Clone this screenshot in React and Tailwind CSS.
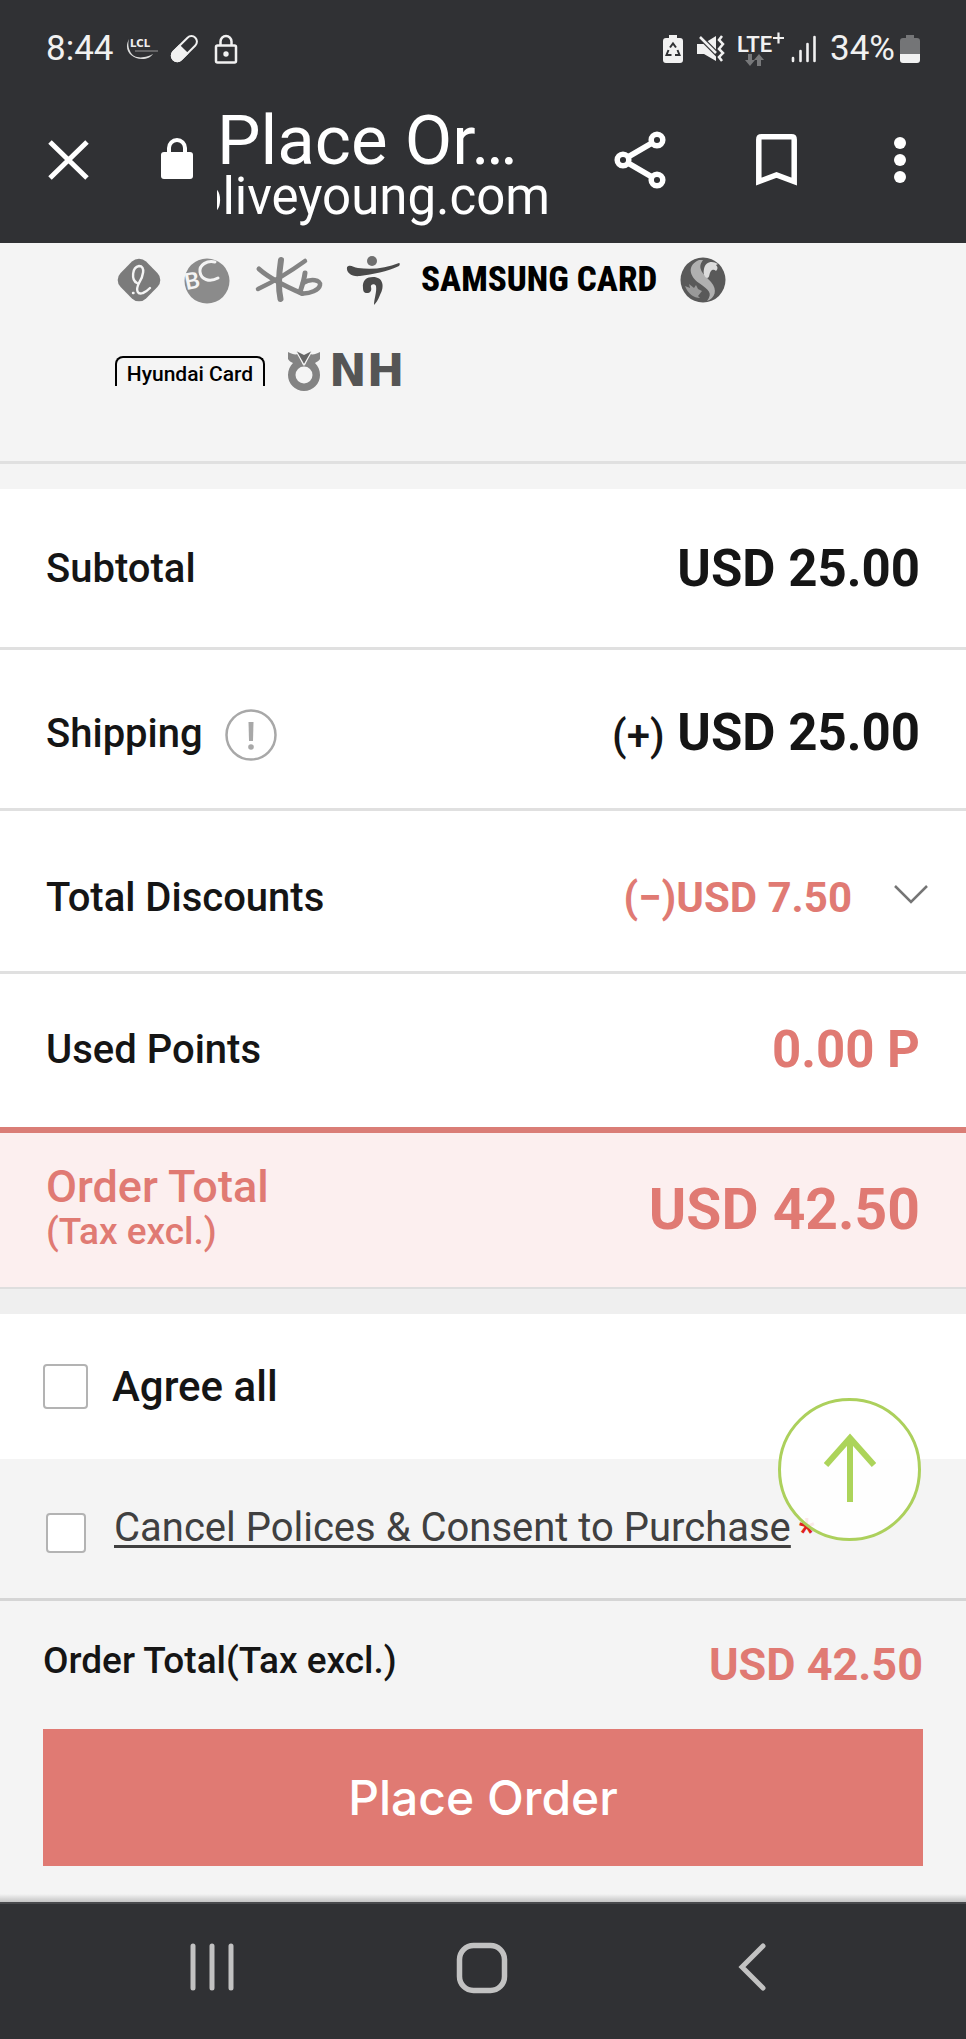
import { useState } from 'react'

const cardBrands = {
  lotte: (
    <svg className="h-12 w-12" viewBox="0 0 48 48" role="img" aria-label="Lotte Card">
      <rect x="6" y="6" width="36" height="36" rx="10" fill="#7b7b7b" transform="rotate(45 24 24)" />
      <path d="M18 37h.5M22 27C16 24 17 11 24 10C31 10 28 21 24 27C20 35 23 39 28 37C31 36 33 34 35 32" fill="none" stroke="#f4f4f4" strokeWidth="2.400" strokeLinecap="round" />
    </svg>
  ),
  bc: (
    <svg className="h-12 w-12" viewBox="0 0 48 48" role="img" aria-label="BC Card">
      <circle cx="24" cy="25" r="22.500" fill="#8b8b8b" />
      <text x="2" y="33" transform="rotate(-12 8 28)" fontFamily="Lato, sans-serif" fontSize="23" fontWeight="700" fill="#f4f4f4">B</text>
      <path d="M32 6c-8-2-16 3-15 10s9 11 18 6" fill="none" stroke="#f4f4f4" strokeWidth="3" strokeLinecap="round" />
    </svg>
  ),
  kb: (
    <svg className="h-12 w-[68px]" viewBox="0 0 68 48" role="img" aria-label="KB Card" fill="none" stroke="#838383" strokeLinecap="round">
      <path d="M26 4C24 17 23 32 25.500 43" strokeWidth="6" />
      <path d="M4 13C14 22 32 31 47 37.500" strokeWidth="5" />
      <path d="M50 5C32 18 18 26 3 33" strokeWidth="4.500" />
      <path d="M50 17C49 25 47 30 45 36" strokeWidth="5" />
      <path d="M48 27c8-5 18-3 17 2s-10 9-18 8.500" strokeWidth="4.500" />
    </svg>
  ),
  hana: (
    <svg className="h-[50px] w-[54px]" viewBox="0 0 54 50" role="img" aria-label="Hana Card">
      <circle cx="26" cy="6" r="5" fill="#6f6f6f" />
      <path d="M1 12c3-3 6 0 11 1 15 2 28 0 41-5 1 0 1 2 0 3C41 17 27 19 14 21 6 22 0 18 1 12Z" fill="#4a4a4a" />
      <path d="M17 33c-1-8 4-11 10-11 10 0 12 9 7 18-2 5-4 8-6 10 0-6 3-13 2-19-1-3-6-2-5 1 1 4-1 6-4 6s-4-2-4-5Z" fill="#4a4a4a" />
    </svg>
  ),
  shinhan: (
    <svg className="h-12 w-12" viewBox="0 0 48 48" role="img" aria-label="Shinhan Card">
      <circle cx="24" cy="24" r="22.500" fill="#595959" />
      <path d="M20 4C8 9 10 20 20 27s14 10 8 18c8-3 11-11 4-19S17 13 24 4Z" fill="#b0b0b0" />
      <path d="M25 13c1-7 8-9 14-5l-2 1c2 2 2 4 0 6-2-2-4-1-5 0-2 2-1 7-4 7-3-1-4-5-3-9Z" fill="#dcdcdc" />
      <path d="M6 30l5 2-1-4 5 4 2-3 2 4 4 2-4 5 2 2c-6 0-12-4-15-12Z" fill="#999" />
    </svg>
  ),
  nh: (
    <svg className="h-[42px] w-[34px]" viewBox="0 0 34 42" role="img" aria-label="NH emblem">
      <path d="M1 2c4 2 7 3 10 2l5 11h2l5-11c3 1 6 0 10-2v7c-2 3-4 3-5 4 3 3 5 7 5 12a16 16 0 0 1-32 0c0-5 2-9 5-12-2-1-4-2-5-4Z" fill="#838383" />
      <path d="M9 1l8 4 8-4-8 14Z" fill="#666" />
      <path d="M9 1l8 14 8-14" fill="none" stroke="#f4f4f4" strokeWidth="1.200" />
      <circle cx="17" cy="25" r="8.500" fill="#f4f4f4" />
    </svg>
  ),
}

function StatusBar() {
  return (
    <div className="flex h-24 items-center justify-between px-[46px] pt-[2px] text-[35px] leading-10 text-[#f1f1f1]">
      <div className="flex items-center gap-3">
        <span>8:44</span>
        <svg className="h-6 w-8" viewBox="0 0 32 24" role="img" aria-label="LCL">
          <path d="M3 2c-6 11 2 20 13 20 5 0 9-2 11-5C22 20 8 24 4 14 2 10 2 6 3 2Z" fill="#ddd" />
          <text x="4" y="10" fontFamily="DejaVu Sans, sans-serif" fontSize="10" fontWeight="700" fill="#eee">LCL</text>
          <path d="M9 14h23" stroke="#888" strokeWidth="1.200" />
        </svg>
        <svg className="h-7 w-7" viewBox="0 0 28 28" aria-hidden="true">
          <g transform="rotate(45 14 14)">
            <rect x="8.500" y="-2" width="11" height="31" rx="5.500" fill="none" stroke="#f1f1f1" strokeWidth="2" />
            <path d="M7.500 14h13v9.500a6.500 6.500 0 0 1-13 0Z" fill="#f1f1f1" />
          </g>
        </svg>
        <svg className="ml-1 h-[30px] w-6" viewBox="0 0 24 30" fill="none" stroke="#f1f1f1" strokeWidth="2.500" aria-hidden="true">
          <rect x="2" y="11.500" width="20" height="17" rx="1.500" />
          <path d="M6.500 11V7.500a5.500 5.500 0 0 1 11 0V11" />
          <circle cx="12" cy="20" r="2.700" fill="#f1f1f1" stroke="none" />
        </svg>
      </div>

      <div className="flex items-center">
        <svg className="mr-[14px] h-[30px] w-5" viewBox="0 0 20 30" aria-hidden="true">
          <path d="M6 1h8v3h3q3 0 3 3v19q0 3-3 3H3q-3 0-3-3V7q0-3 3-3h3Z" fill="#f1f1f1" />
          <path d="M7 13.500l3-4 3 4M14.500 16l2 5h-4.500M8.500 21H3.500l2-5" fill="none" stroke="#303134" strokeWidth="2" />
        </svg>
        <svg className="mr-3 h-7 w-7" viewBox="0 0 28 28" aria-hidden="true">
          <path d="M0 9h6l13-8v25L7 19H0Z" fill="#f1f1f1" />
          <path d="M1 0l20 20" stroke="#303134" strokeWidth="5" />
          <path d="M3 2l16 16" stroke="#f1f1f1" strokeWidth="2.500" />
          <path d="M25 1l-3 4 4 4-4 5 4 4-4 4 3 4" fill="none" stroke="#f1f1f1" strokeWidth="2.500" />
        </svg>
        <svg className="mr-[6px] h-9 w-12" viewBox="0 0 48 36" aria-hidden="true">
          <text x="0" y="21" fontFamily="Roboto, sans-serif" fontSize="22" fontWeight="600" fill="#f1f1f1">LTE</text>
          <path d="M36 7h11M41.500 1.500v11" stroke="#f1f1f1" strokeWidth="2.200" />
          <path d="M13 23v9M22 26v9" stroke="#77787a" strokeWidth="4" />
          <path d="M8 29h10l-5 6ZM17 29h10l-5-6Z" fill="#77787a" />
        </svg>
        <svg className="mr-[13px] h-7 w-[26px]" viewBox="0 0 26 28" stroke="#f1f1f1" strokeWidth="2.600" strokeLinecap="round" aria-hidden="true">
          <path d="M2 23v3M9.500 16v10M16.500 9v17M23.500 2v24" />
        </svg>
        <span className="mr-[5px]">34%</span>
        <svg className="h-[30px] w-5" viewBox="0 0 20 30" aria-hidden="true">
          <path d="M6 1h8v3h3q3 0 3 3v14H0V7q0-3 3-3h3Z" fill="#747577" />
          <path d="M0 20h20v6q0 3-3 3H3q-3 0-3-3Z" fill="#f1f1f1" />
        </svg>
      </div>
    </div>
  )
}

function BrowserBar() {
  return (
    <div className="flex h-[147px] items-start pl-12 pr-[59px] text-white">
      <button type="button" aria-label="Close" className="mt-11">
        <svg className="h-10 w-[41px]" viewBox="0 0 41 40" stroke="currentColor" strokeWidth="5">
          <path d="M2 2l37 36M39 2L2 38" />
        </svg>
      </button>
      <svg className="ml-[72px] mt-[42px] h-[42px] w-8 shrink-0" viewBox="0 0 32 42" aria-hidden="true">
        <rect x="0" y="14" width="32" height="27" rx="3" fill="#fff" />
        <path d="M8 15v-5a8 8 0 0 1 16 0v5" fill="none" stroke="#fff" strokeWidth="4" />
      </svg>
      <div className="ml-6 min-w-0 flex-1 pt-3">
        <h1 className="whitespace-nowrap text-[69px] leading-[66px]">Place Or…</h1>
        <div className="flex justify-end overflow-x-clip text-[51px] leading-[46px]">
          <span>oliveyoung.com</span>
        </div>
      </div>
      <div className="ml-16 mt-[35px] flex shrink-0 items-center">
        <button type="button" aria-label="Share">
          <svg className="h-[58px] w-[52px]" viewBox="0 0 52 58" fill="none" stroke="currentColor" strokeWidth="5.500">
            <circle cx="9" cy="29" r="5.800" />
            <circle cx="43" cy="9" r="5.800" />
            <circle cx="43" cy="49" r="5.800" />
            <path d="M14 26l24-14M14 32l24 14" />
          </svg>
        </button>
        <button type="button" aria-label="Bookmark" className="ml-[90px]">
          <svg className="h-[52px] w-[41px]" viewBox="0 0 41 52" fill="none" stroke="currentColor" strokeWidth="5.500">
            <path d="M2.800 47.500V5.500q0-2.700 2.700-2.700h30q2.700 0 2.700 2.700v42L20.500 41Z" />
          </svg>
        </button>
        <button type="button" aria-label="More options" className="ml-24">
          <svg className="h-12 w-[14px]" viewBox="0 0 14 48" fill="currentColor">
            <circle cx="7" cy="7" r="6" />
            <circle cx="7" cy="24" r="6" />
            <circle cx="7" cy="41" r="6" />
          </svg>
        </button>
      </div>
    </div>
  )
}

function PaymentLogos() {
  return (
    <section className="border-b-3 border-[#e0e0e0] bg-[#f4f4f4] px-[115px] pb-[68px] pt-3">
      <div className="flex h-[50px] items-center">
        {cardBrands.lotte}
        <span className="ml-5">{cardBrands.bc}</span>
        <span className="ml-6">{cardBrands.kb}</span>
        <span className="ml-[23px]">{cardBrands.hana}</span>
        <span className="ml-[21px] whitespace-nowrap font-['Roboto_Condensed',Roboto,sans-serif] text-[35px] font-extrabold leading-10 text-black">
          SAMSUNG CARD
        </span>
        <span className="ml-[22px]">{cardBrands.shinhan}</span>
      </div>
      <div className="mt-[43px] flex h-[45px] items-center">
        <div className="flex h-[30px] w-[150px] items-center justify-center rounded-t-lg border-x-2 border-t-2 border-black pt-1 text-[21px] font-medium leading-6 text-black">
          Hyundai Card
        </div>
        <span className="ml-[22px]">{cardBrands.nh}</span>
        <span className="ml-2 font-['DejaVu_Sans',sans-serif] text-[45px] font-bold leading-[45px] text-[#555]">NH</span>
      </div>
    </section>
  )
}

export default function App() {
  const [agreeAll, setAgreeAll] = useState(false)
  const [consent, setConsent] = useState(false)

  const toggleAll = (e) => {
    setAgreeAll(e.target.checked)
    setConsent(e.target.checked)
  }

  const row = 'flex items-center justify-between border-b-3 border-[#e0e0e0] px-[46px]'
  const label = 'text-[40px] leading-[48px] font-medium'
  const amount = 'text-[51px] leading-[60px] font-bold'
  const checkbox = 'shrink-0 appearance-none rounded-sm border-2 border-[#b3b3b3] bg-white checked:bg-[#e07a73]'

  return (
    <div className="min-h-screen bg-[#f4f4f4] font-[Roboto,sans-serif] text-[#151515]">
      <header className="bg-[#303134]">
        <StatusBar />
        <BrowserBar />
      </header>

      <main>
        <PaymentLogos />

        {/* Price summary */}
        <dl className="mt-[25px] bg-white">
          <div className={`${row} min-h-[161px] pt-[2px]`}>
            <dt className={label}>Subtotal</dt>
            <dd className={amount}>USD 25.00</dd>
          </div>
          <div className={`${row} min-h-[161px] pt-[10px]`}>
            <dt className={`${label} flex items-center gap-[22px]`}>
              Shipping
              <button type="button" aria-label="Shipping information" className="pt-[2px]">
                <svg className="h-[52px] w-[52px]" viewBox="0 0 52 52">
                  <circle cx="26" cy="26" r="24.500" fill="none" stroke="#a8a8a8" strokeWidth="2.500" />
                  <path d="M23.500 13h5l-.5 19h-4Z" fill="#a8a8a8" />
                  <circle cx="26" cy="38" r="2.800" fill="#a8a8a8" />
                </svg>
              </button>
            </dt>
            <dd className={amount}>
              <span className="text-[42px] font-medium">(+)</span> USD 25.00
            </dd>
          </div>
          <div className={`${row} min-h-[163px] pt-[14px]`}>
            <dt className={label}>Total Discounts</dt>
            <dd className="flex items-center gap-[42px] text-[42px] font-bold leading-[48px] text-[#e07a73]">
              (−)USD 7.50
              <button type="button" aria-label="Show discounts" className="-mr-2 pb-[6px]">
                <svg className="h-5 w-[34px]" viewBox="0 0 34 20" fill="none" stroke="#757575" strokeWidth="2.500">
                  <path d="M1 1l16 16L33 1" />
                </svg>
              </button>
            </dd>
          </div>
          <div className="flex min-h-[153px] items-center justify-between px-[46px] pb-[2px]">
            <dt className={label}>Used Points</dt>
            <dd className={`${amount} text-[#e07a73]`}>0.00 P</dd>
          </div>
          <div className="flex min-h-[162px] items-center justify-between border-b-2 border-t-6 border-b-[#dedede] border-t-[#da7d76] bg-[#fcefef] px-[46px] text-[#e07a73]">
            <dt className="pb-[2px] text-[45px] font-medium leading-[46px]">
              Order Total
              <span className="block text-[37px] leading-[44px]">(Tax excl.)</span>
            </dt>
            <dd className="text-[57px] font-bold leading-[60px]">USD 42.50</dd>
          </div>
        </dl>

        {/* Agreements */}
        <section className="relative border-t-25 border-[#efefef]">
          <div className="flex h-[145px] items-center gap-6 bg-white px-[43px]">
            <input id="agree-all" type="checkbox" checked={agreeAll} onChange={toggleAll} className={`${checkbox} h-[45px] w-[45px]`} />
            <label htmlFor="agree-all" className="text-[42px] font-medium leading-[48px]">Agree all</label>
          </div>
          <div className="flex h-[142px] items-center border-b-3 border-[#d5d5d5] px-[46px]">
            <input
              id="consent"
              type="checkbox"
              aria-label="Cancel Polices & Consent to Purchase"
              checked={consent}
              onChange={e => setConsent(e.target.checked)}
              className={`${checkbox} mt-2 h-10 w-10`}
            />
            <p className="ml-7 flex items-center whitespace-nowrap pb-[2px] text-[40px] leading-[48px] text-[#404040]">
              <a href="#policies" className="underline decoration-3 underline-offset-4">Cancel Polices &amp; Consent to Purchase</a>
              <span className="ml-2 pt-2 text-[36px] font-medium text-[#e02020]">*</span>
            </p>
          </div>
          <button
            type="button"
            aria-label="Back to top"
            className="absolute right-[45px] top-[84px] flex h-[143px] w-[143px] items-center justify-center rounded-full border-3 border-[#acd05c] bg-white/90 pb-1"
          >
            <svg className="h-[70px] w-[52px]" viewBox="0 0 52 70" fill="none" stroke="#acd45a" strokeWidth="6">
              <path d="M26 4v65M2 32L26 5l24 27" />
            </svg>
          </button>
        </section>
      </main>

      {/* Sticky order bar */}
      <footer>
        <div className="px-[43px] pb-7">
          <div className="flex h-32 items-center justify-between">
            <span className="pb-2 text-[37px] font-medium leading-[44px]">Order Total(Tax excl.)</span>
            <span className="text-[45px] font-bold leading-[52px] text-[#e07a73]">USD 42.50</span>
          </div>
          <button type="button" className="h-[137px] w-full bg-[#e07a73] font-[Inter,sans-serif] text-[48px] font-medium text-white">
            Place Order
          </button>
        </div>
        <div className="h-2 bg-linear-to-b from-[#f4f4f4] to-[#c4c4c4]" />
        <nav className="flex h-[137px] items-start justify-between border-t-2 border-[#48494c] bg-[#303134] pl-[189px] pr-[200px] pt-[38px] text-[#c2c2c2]">
          <button type="button" aria-label="Recent apps">
            <svg className="h-[50px] w-[46px]" viewBox="0 0 46 50" stroke="currentColor" strokeWidth="5" strokeLinecap="round">
              <path d="M4 4v42M23 4v42M42 4v42" />
            </svg>
          </button>
          <button type="button" aria-label="Home">
            <svg className="h-[52px] w-[52px]" viewBox="0 0 52 52" fill="none" stroke="currentColor" strokeWidth="5.500">
              <rect x="3.500" y="3.500" width="45" height="45" rx="14" />
            </svg>
          </button>
          <button type="button" aria-label="Back" className="pl-[10px]">
            <svg className="h-[50px] w-[28px]" viewBox="0 0 28 50" fill="none" stroke="currentColor" strokeWidth="5" strokeLinecap="round">
              <path d="M25 4L4 25l21 21" />
            </svg>
          </button>
        </nav>
      </footer>
    </div>
  )
}
